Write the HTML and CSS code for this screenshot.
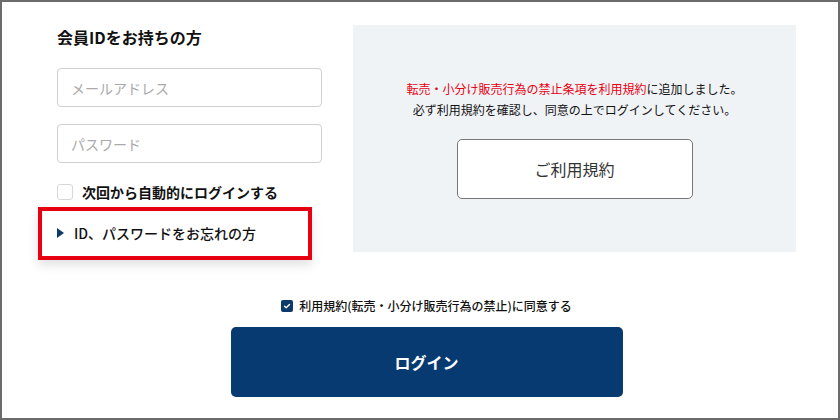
FILE: index.html
```html
<!DOCTYPE html>
<html lang="ja">
<head>
    <meta charset="UTF-8">
    <meta name="viewport" content="width=device-width, initial-scale=1.0">
    <title>ログイン</title>
    <link rel="stylesheet" href="styles.css">
</head>
<body>
    <div class="frame">
        <div class="top">
            <div class="member">
                <h2 class="member-title">会員IDをお持ちの方</h2>
                <input class="field" type="text" placeholder="メールアドレス">
                <input class="field field-pass" type="password" placeholder="パスワード">
                <label class="remember">
                    <span class="box"></span>
                    次回から自動的にログインする
                </label>
                <div class="forgot">
                    <span class="arrow"></span>
                    <a href="#">ID、パスワードをお忘れの方</a>
                    <span class="highlight"></span>
                </div>
            </div>
            <div class="notice">
                <p class="notice-text">
                    <span class="red">転売・小分け販売行為の禁止条項を利用規約</span>に追加しました。<br>
                    必ず利用規約を確認し、同意の上でログインしてください。
                </p>
                <button class="terms">ご利用規約</button>
            </div>
        </div>
        <div class="bottom">
            <label class="agree">
                <span class="agree-box">
                    <svg width="8" height="8" viewBox="0 0 8 8"><path d="M1.5 4.2 L3.2 5.8 L6.5 2.4" fill="none" stroke="#fff" stroke-width="1.4" stroke-linecap="round" stroke-linejoin="round"/></svg>
                </span>
                利用規約(転売・小分け販売行為の禁止)に同意する
            </label>
            <button class="login">ログイン</button>
        </div>
    </div>
</body>
</html>
```

FILE: styles.css
```css
body {
    margin: 0;
    font-family: "Noto Sans CJK JP", "Noto Sans", sans-serif;
    color: #222;
    background-color: #fff;
}

.frame {
    width: 840px;
    height: 420px;
    box-sizing: border-box;
    border: 2px solid #6b6b6b;
    padding: 23px 42px 0 55px;
}

.top {
    display: flex;
    gap: 31px;
}

.member {
    width: 265px;
    display: flex;
    flex-direction: column;
}

.member-title {
    margin: 0;
    font-size: 16px;
    line-height: 24px;
    font-weight: 700;
    color: #111;
}

.field {
    height: 39px;
    box-sizing: border-box;
    margin-top: 19px;
    padding: 0 13px;
    border: 1px solid #cfcfcf;
    border-radius: 4px;
    font-family: inherit;
    font-size: 14px;
}

.field::placeholder {
    color: #aaa;
}

.field-pass {
    margin-top: 17px;
}

.remember {
    display: flex;
    align-items: center;
    gap: 9px;
    margin-top: 20px;
    font-size: 14px;
    line-height: 18px;
    font-weight: 700;
    color: #111;
}

.box {
    width: 16px;
    height: 16px;
    box-sizing: border-box;
    border: 1px solid #d8d8d8;
    border-radius: 3px;
}

.forgot {
    position: relative;
    display: flex;
    align-items: center;
    gap: 10px;
    margin-top: 23px;
    font-size: 14px;
    line-height: 18px;
    font-weight: 500;
}

.forgot a {
    color: #111;
    text-decoration: none;
}

.arrow {
    width: 0;
    height: 0;
    border-top: 5px solid transparent;
    border-bottom: 5px solid transparent;
    border-left: 7px solid #0b3a6b;
}

.highlight {
    position: absolute;
    left: -19px;
    top: -17px;
    width: 274px;
    height: 53px;
    box-sizing: border-box;
    border: 4px solid #e60012;
    box-shadow: 0 5px 10px rgba(0, 0, 0, 0.12);
}

.notice {
    flex: 1;
    height: 227px;
    background-color: #f0f3f6;
    display: flex;
    flex-direction: column;
    align-items: center;
    justify-content: center;
}

.notice-text {
    margin: 0 0 19px;
    font-size: 12px;
    line-height: 21px;
    text-align: center;
    color: #111;
}

.red {
    color: #e60012;
}

.terms {
    width: 236px;
    height: 60px;
    background-color: #fff;
    border: 1px solid #777;
    border-radius: 5px;
    font-family: inherit;
    font-size: 16px;
    color: #333;
}

.bottom {
    display: flex;
    flex-direction: column;
    align-items: center;
    margin-top: 45px;
}

.agree {
    display: flex;
    align-items: center;
    gap: 6px;
    font-size: 12px;
    line-height: 18px;
    font-weight: 500;
    color: #111;
}

.agree-box {
    width: 12px;
    height: 12px;
    border-radius: 2px;
    background-color: #0b3a6b;
    display: flex;
    align-items: center;
    justify-content: center;
}

.login {
    width: 392px;
    height: 70px;
    margin-top: 12px;
    background-color: #063a70;
    border: none;
    border-radius: 5px;
    font-family: inherit;
    font-size: 16px;
    font-weight: 700;
    color: #fff;
}
```
